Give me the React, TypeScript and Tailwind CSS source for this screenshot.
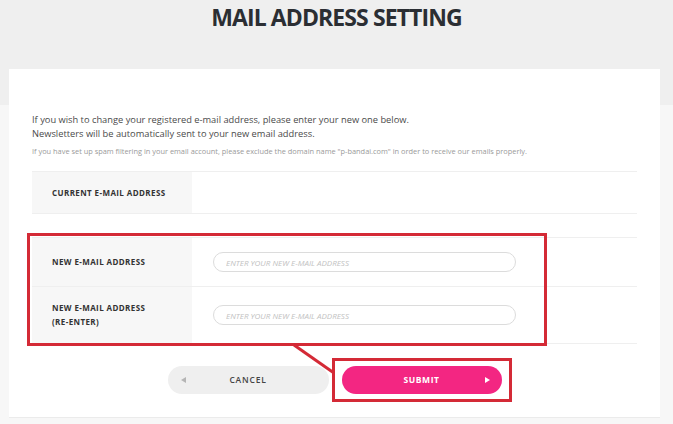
import React from "react";

const font = { fontFamily: '"Open Sans", "Noto Sans", sans-serif' };

function Triangle({ dir, className }: { dir: "left" | "right"; className?: string }) {
  return (
    <svg width="5" height="6" viewBox="0 0 5 6" className={className}>
      {dir === "left" ? <path d="M5 0 L0 3 L5 6 Z" fill="currentColor" /> : <path d="M0 0 L5 3 L0 6 Z" fill="currentColor" />}
    </svg>
  );
}

function EmailInput() {
  return (
    <input
      type="text"
      placeholder="ENTER YOUR NEW E-MAIL ADDRESS"
      className="ml-[21px] h-[20px] w-[303px] rounded-full border border-[#dcdcdc] bg-white pl-[12px] text-[8px] italic text-[#333] outline-none placeholder:text-[#c2c2c2]"
    />
  );
}

export default function App() {
  return (
    <div
      className="relative h-[424px] w-[673px] overflow-hidden bg-[linear-gradient(#efefef_0_105px,#f7f7f7_105px)]"
      style={font}
    >
      <h1 className="pt-[4px] text-center text-[23px] font-bold leading-[27px] tracking-[-0.9px] text-[#2b2e33]">
        MAIL ADDRESS SETTING
      </h1>

      <div className="ml-[9px] mt-[38px] w-[651px] border-b border-[#ebebeb] bg-white pb-[23px] pl-[23px] pt-[44px]">
        <p className="text-[9.3px] leading-[14px] text-[#4a4a4a]">
          If you wish to change your registered e-mail address, please enter your new one below.
        </p>
        <p className="text-[9.3px] leading-[14px] text-[#4a4a4a]">
          Newsletters will be automatically sent to your new email address.
        </p>
        <p className="mt-[5px] text-[7.4px] leading-[11px] text-[#9a9a9a]">
          If you have set up spam filtering in your email account, please exclude the domain name "p-bandai.com" in order to receive our emails properly.
        </p>

        <div className="mt-[14px] w-[605px]">
          <div className="flex h-[43px] items-center border-y border-[#efefef]">
            <div className="flex h-full w-[160px] items-center bg-[#f7f7f7] pl-[20px] text-[8px] font-bold tracking-[0.4px] text-[#333]">
              CURRENT E-MAIL ADDRESS
            </div>
            <div className="flex-1" />
          </div>

          <div className="mt-[23px] border-t border-[#efefef]">
            <div className="flex h-[49px] items-center border-b border-[#efefef]">
              <div className="flex h-full w-[160px] items-center bg-[#f7f7f7] pl-[20px] text-[8px] font-bold tracking-[0.4px] text-[#333]">
                NEW E-MAIL ADDRESS
              </div>
              <EmailInput />
            </div>
            <div className="flex h-[57px] items-center border-b border-[#efefef]">
              <div className="flex h-full w-[160px] flex-col justify-center bg-[#f7f7f7] pl-[20px] text-[8px] font-bold leading-[14px] tracking-[0.4px] text-[#333]">
                <span>NEW E-MAIL ADDRESS</span>
                <span>(RE-ENTER)</span>
              </div>
              <EmailInput />
            </div>
          </div>
        </div>

        <div className="mt-[22px] flex justify-center gap-[13px] pr-[23px]">
          <button
            type="button"
            className="relative flex h-[28px] w-[161px] items-center justify-center rounded-full bg-[#efefef] text-[8.5px] font-semibold tracking-[0.8px] text-[#444]"
          >
            <Triangle dir="left" className="absolute left-[13px] text-[#b5b5b5]" />
            CANCEL
          </button>
          <button
            type="button"
            className="relative flex h-[28px] w-[160px] items-center justify-center rounded-full bg-[#f32682] text-[8.5px] font-bold tracking-[0.6px] text-white"
          >
            SUBMIT
            <Triangle dir="right" className="absolute right-[12px] text-white" />
          </button>
        </div>
      </div>

      {/* annotation overlay */}
      <div className="pointer-events-none absolute left-[27px] top-[233px] h-[113px] w-[520px] border-[3px] border-[#d42a36]" />
      <div className="pointer-events-none absolute left-[332px] top-[358px] h-[44px] w-[180px] border-[3px] border-[#d42a36]" />
      <svg className="pointer-events-none absolute left-0 top-0" width="673" height="424">
        <line x1="294" y1="345" x2="334" y2="373" stroke="#d42a36" strokeWidth="3" />
      </svg>
    </div>
  );
}
